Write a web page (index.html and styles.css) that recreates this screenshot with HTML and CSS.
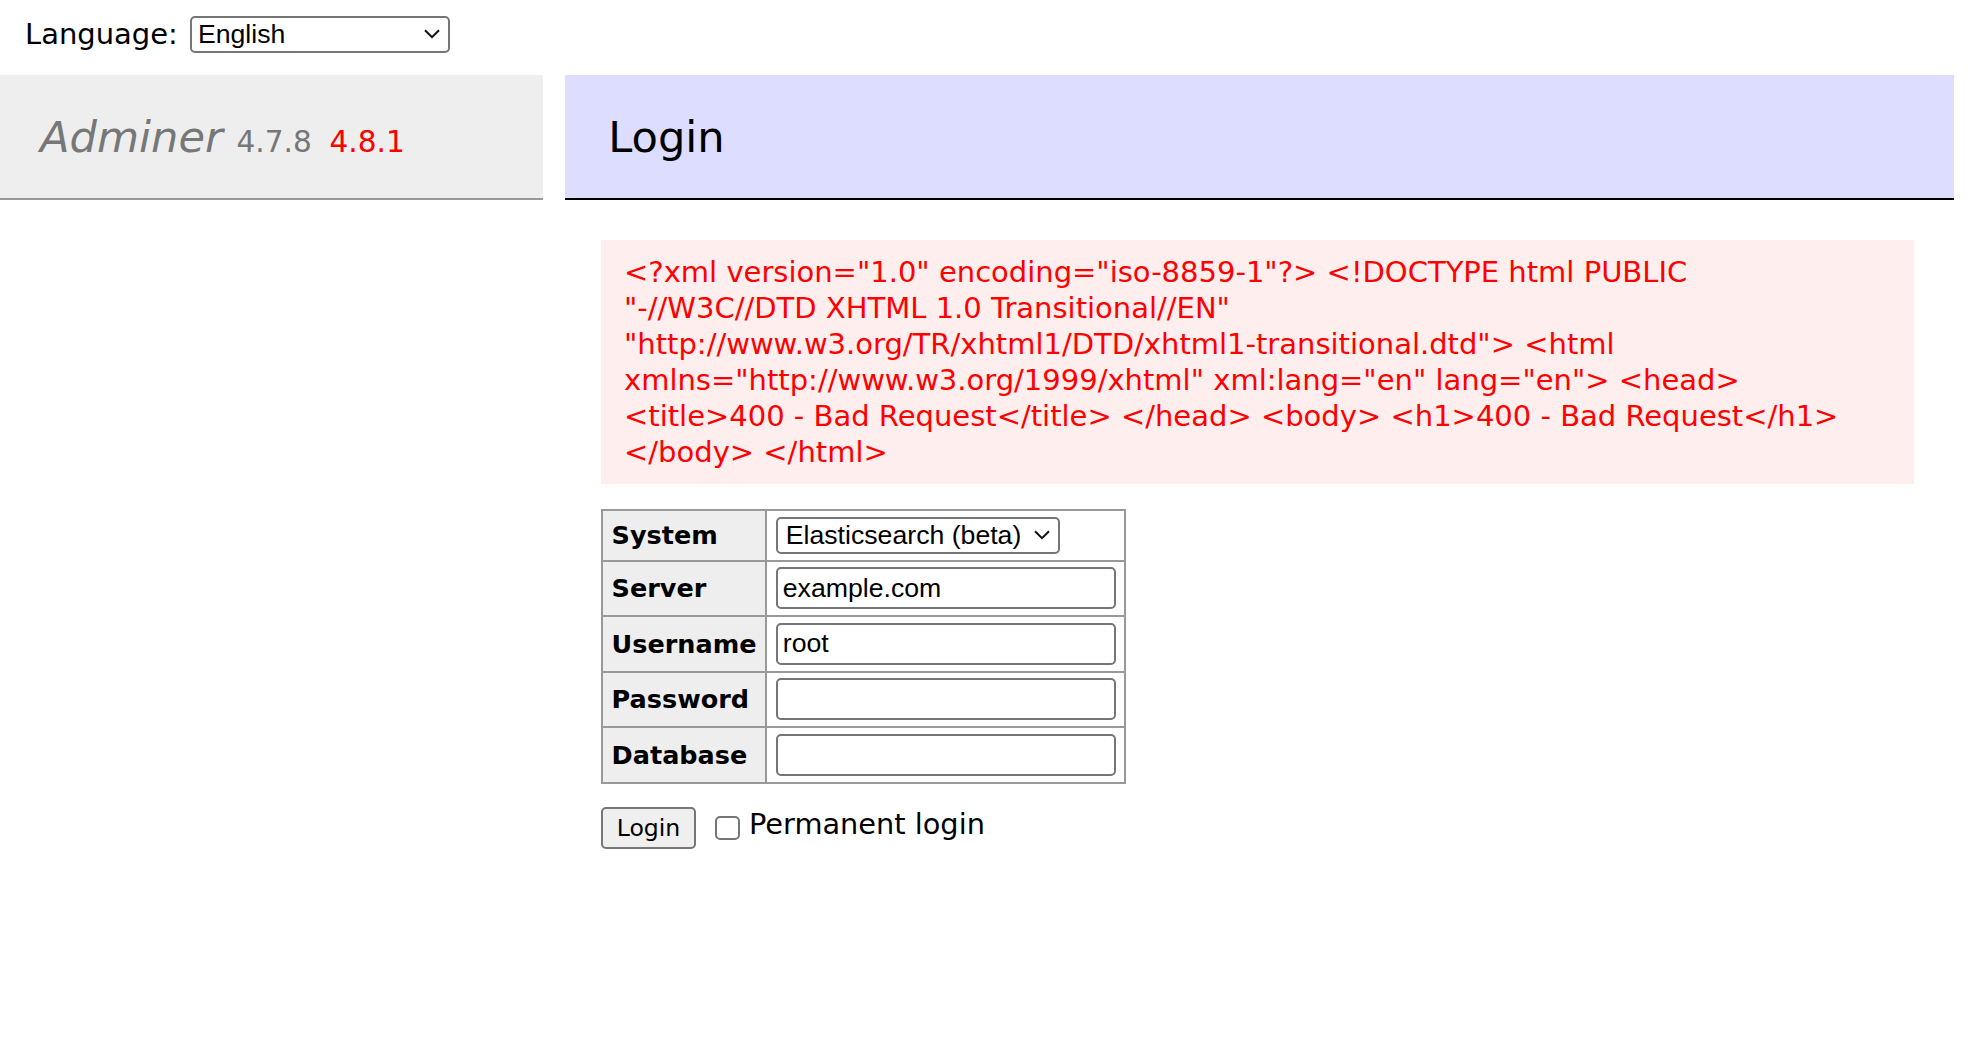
FILE: index.html
```html
<!DOCTYPE html>
<html lang="en">
<head>
<meta charset="utf-8">
<title>Login - Adminer</title>
<link rel="stylesheet" href="styles.css">
</head>
<body>
<form class="lang">
  <label class="lang-label" for="lang">Language:</label>
  <span class="select-wrap lang-select">
    <select id="lang" class="select"><option>English</option></select>
    <svg class="chev" width="16" height="10" viewBox="0 0 16 10"><path d="M1 1.2 L8 8.2 L15 1.2" fill="none" stroke="#111" stroke-width="2"/></svg>
  </span>
</form>
<div class="page">
  <div class="menu">
    <h1 class="brand"><span class="brand-name">Adminer</span> <span class="version">4.7.8</span> <span class="version version-new">4.8.1</span></h1>
  </div>
  <div class="content">
    <h2 class="title">Login</h2>
    <div class="error">&lt;?xml version="1.0" encoding="iso-8859-1"?&gt; &lt;!DOCTYPE html PUBLIC<br>"-//W3C//DTD XHTML 1.0 Transitional//EN"<br>"http://www.w3.org/TR/xhtml1/DTD/xhtml1-transitional.dtd"&gt; &lt;html<br>xmlns="http://www.w3.org/1999/xhtml" xml:lang="en" lang="en"&gt; &lt;head&gt;<br>&lt;title&gt;400 - Bad Request&lt;/title&gt; &lt;/head&gt; &lt;body&gt; &lt;h1&gt;400 - Bad Request&lt;/h1&gt;<br>&lt;/body&gt; &lt;/html&gt;</div>
    <form class="login">
      <table class="login-table">
        <tr class="row-first">
          <th>System</th>
          <td>
            <span class="select-wrap system-select">
              <select class="select"><option>Elasticsearch (beta)</option></select>
              <svg class="chev" width="16" height="10" viewBox="0 0 16 10"><path d="M1 1.2 L8 8.2 L15 1.2" fill="none" stroke="#111" stroke-width="2"/></svg>
            </span>
          </td>
        </tr>
        <tr><th>Server</th><td><input class="field" type="text" value="example.com"></td></tr>
        <tr><th>Username</th><td><input class="field" type="text" value="root"></td></tr>
        <tr><th>Password</th><td><input class="field" type="password" value=""></td></tr>
        <tr><th>Database</th><td><input class="field" type="text" value=""></td></tr>
      </table>
      <div class="actions">
        <button class="btn" type="button">Login</button>
        <label class="perm"><input class="check" type="checkbox"><span>Permanent login</span></label>
      </div>
    </form>
  </div>
</div>
</body>
</html>
```

FILE: styles.css
```css
html, body {
  margin: 0;
  padding: 0;
  background: #fff;
}

body {
  color: #000;
  font-family: "DejaVu Sans", Verdana, sans-serif;
  font-size: 28.8px;
  line-height: 1.25;
}

/* language bar */
.lang {
  display: flex;
  align-items: center;
  height: 75px;
  box-sizing: border-box;
  padding: 0 0 7px 25px;
  margin: 0;
}

.lang-label {
  line-height: 36px;
  font-size: 29px;
}

.lang-select {
  margin-left: 12px;
}

.select-wrap {
  position: relative;
  display: inline-block;
}

.select {
  -webkit-appearance: none;
  appearance: none;
  display: block;
  box-sizing: border-box;
  height: 37px;
  margin: 0;
  padding: 0 36px 0 6px;
  border: 2px solid #767676;
  border-radius: 5px;
  background: #fff;
  color: #000;
  font-family: "Liberation Sans", Arial, sans-serif;
  font-size: 26.67px;
  line-height: 31px;
}

.lang-select .select {
  width: 260px;
}

.system-select {
  display: block;
  width: 284px;
}

.system-select .select {
  width: 284px;
  padding-left: 8px;
}

.chev {
  position: absolute;
  right: 10px;
  top: 13px;
  pointer-events: none;
}

/* page */
.page {
  display: flex;
  align-items: flex-start;
}

.menu {
  flex: none;
  width: 543px;
}

.brand {
  margin: 0;
  padding: 34.6px 40px;
  height: 54px;
  font-size: 43.2px;
  line-height: 54px;
  font-weight: normal;
  color: #777;
  background: #eee;
  border-bottom: 2px solid #999;
  white-space: nowrap;
}

.brand-name {
  font-style: italic;
}

.version {
  font-size: 29.6px;
  line-height: 1;
  color: #777;
}

.version-new {
  color: #f00;
  margin-left: 4px;
}

.content {
  flex: 1;
  min-width: 0;
  margin: 0 32px 0 58px;
}

.title {
  margin: 0 0 40px -36px;
  padding: 34.6px 43.2px;
  font-size: 43.2px;
  line-height: 54px;
  font-weight: normal;
  color: #000;
  background: #ddf;
  border-bottom: 2px solid #000;
}

.error {
  margin: 0 40px 0 0;
  padding: 14px 23px;
  font-size: 29px;
  line-height: 36px;
  color: #f00;
  background: #fee;
}

.login {
  margin: 0;
}

.login-table {
  border-collapse: collapse;
  margin: 25px 0 0 0;
}

.login-table th,
.login-table td {
  border: 2px solid #999;
  padding: 5.75px 8.6px;
  vertical-align: middle;
}

.login-table td {
  line-height: 0;
}

.login-table th {
  background: #eee;
  text-align: left;
  font-size: 25.5px;
  font-weight: bold;
  line-height: 32px;
  white-space: nowrap;
}

.field {
  display: block;
  box-sizing: border-box;
  width: 340px;
  height: 42px;
  margin: 0;
  padding: 0 5px;
  border: 2px solid #767676;
  border-radius: 5px;
  background: #fff;
  color: #000;
  font-family: "Liberation Sans", Arial, sans-serif;
  font-size: 26.67px;
  line-height: normal;
}

.actions {
  display: flex;
  align-items: center;
  margin-top: 23px;
}

.btn {
  box-sizing: border-box;
  width: 95px;
  height: 42px;
  margin: 0;
  padding: 0;
  border: 2px solid #767676;
  border-radius: 5px;
  background: #efefef;
  color: #000;
  font-family: "DejaVu Sans", Verdana, sans-serif;
  font-size: 23.6px;
}

.perm {
  display: flex;
  align-items: center;
  margin-left: 19px;
}

.check {
  -webkit-appearance: none;
  appearance: none;
  box-sizing: border-box;
  width: 25px;
  height: 24px;
  margin: 0 9px 0 0;
  border: 2px solid #767676;
  border-radius: 5px;
  background: #fff;
}

.perm span {
  position: relative;
  top: -3px;
}
```
